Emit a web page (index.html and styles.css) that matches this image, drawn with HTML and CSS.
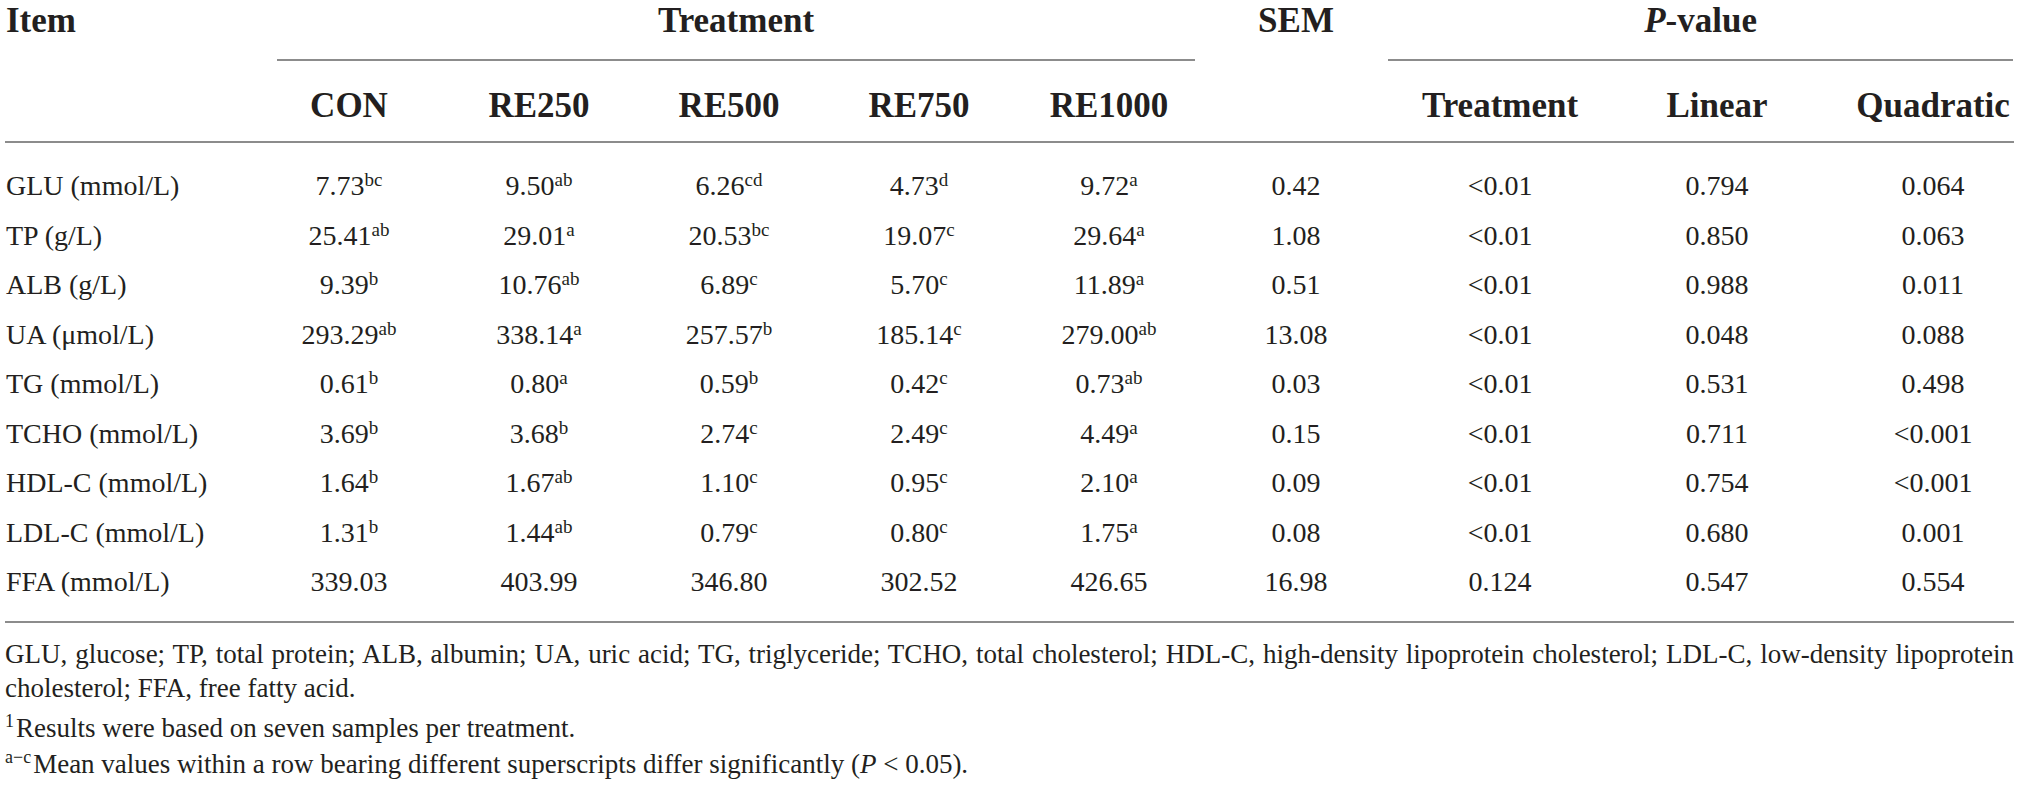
FILE: index.html
```html
<!DOCTYPE html>
<html lang="en">
<head>
  <meta charset="UTF-8">
  <meta name="viewport" content="width=device-width, initial-scale=1.0">
  <title>Serum biochemical parameters</title>
  <link rel="stylesheet" href="styles.css">
</head>
<body>

  <div class="container">
    <table class="data-table">
      <colgroup>
        <col class="col-item">
        <col class="col-trt">
        <col class="col-trt">
        <col class="col-trt">
        <col class="col-trt">
        <col class="col-trt">
        <col class="col-sem">
        <col class="col-p1">
        <col class="col-p2">
        <col class="col-p3">
      </colgroup>
      <thead>
        <tr class="head-top">
          <th rowspan="2" class="item">Item</th>
          <th colspan="5" class="group group-trt"><div class="group-rule">Treatment</div></th>
          <th rowspan="2" class="sem">SEM</th>
          <th colspan="3" class="group group-p"><div class="group-rule"><i>P</i>-value</div></th>
        </tr>
        <tr class="head-sub">
          <th>CON</th>
          <th>RE250</th>
          <th>RE500</th>
          <th>RE750</th>
          <th>RE1000</th>
          <th>Treatment</th>
          <th>Linear</th>
          <th class="last">Quadratic</th>
        </tr>
      </thead>
      <tbody>
        <tr>
          <td class="label">GLU (mmol/L)</td>
          <td>7.73<sup>bc</sup></td>
          <td>9.50<sup>ab</sup></td>
          <td>6.26<sup>cd</sup></td>
          <td>4.73<sup>d</sup></td>
          <td>9.72<sup>a</sup></td>
          <td>0.42</td>
          <td>&lt;0.01</td>
          <td>0.794</td>
          <td class="last">0.064</td>
        </tr>
        <tr>
          <td class="label">TP (g/L)</td>
          <td>25.41<sup>ab</sup></td>
          <td>29.01<sup>a</sup></td>
          <td>20.53<sup>bc</sup></td>
          <td>19.07<sup>c</sup></td>
          <td>29.64<sup>a</sup></td>
          <td>1.08</td>
          <td>&lt;0.01</td>
          <td>0.850</td>
          <td class="last">0.063</td>
        </tr>
        <tr>
          <td class="label">ALB (g/L)</td>
          <td>9.39<sup>b</sup></td>
          <td>10.76<sup>ab</sup></td>
          <td>6.89<sup>c</sup></td>
          <td>5.70<sup>c</sup></td>
          <td>11.89<sup>a</sup></td>
          <td>0.51</td>
          <td>&lt;0.01</td>
          <td>0.988</td>
          <td class="last">0.011</td>
        </tr>
        <tr>
          <td class="label">UA (μmol/L)</td>
          <td>293.29<sup>ab</sup></td>
          <td>338.14<sup>a</sup></td>
          <td>257.57<sup>b</sup></td>
          <td>185.14<sup>c</sup></td>
          <td>279.00<sup>ab</sup></td>
          <td>13.08</td>
          <td>&lt;0.01</td>
          <td>0.048</td>
          <td class="last">0.088</td>
        </tr>
        <tr>
          <td class="label">TG (mmol/L)</td>
          <td>0.61<sup>b</sup></td>
          <td>0.80<sup>a</sup></td>
          <td>0.59<sup>b</sup></td>
          <td>0.42<sup>c</sup></td>
          <td>0.73<sup>ab</sup></td>
          <td>0.03</td>
          <td>&lt;0.01</td>
          <td>0.531</td>
          <td class="last">0.498</td>
        </tr>
        <tr>
          <td class="label">TCHO (mmol/L)</td>
          <td>3.69<sup>b</sup></td>
          <td>3.68<sup>b</sup></td>
          <td>2.74<sup>c</sup></td>
          <td>2.49<sup>c</sup></td>
          <td>4.49<sup>a</sup></td>
          <td>0.15</td>
          <td>&lt;0.01</td>
          <td>0.711</td>
          <td class="last">&lt;0.001</td>
        </tr>
        <tr>
          <td class="label">HDL-C (mmol/L)</td>
          <td>1.64<sup>b</sup></td>
          <td>1.67<sup>ab</sup></td>
          <td>1.10<sup>c</sup></td>
          <td>0.95<sup>c</sup></td>
          <td>2.10<sup>a</sup></td>
          <td>0.09</td>
          <td>&lt;0.01</td>
          <td>0.754</td>
          <td class="last">&lt;0.001</td>
        </tr>
        <tr>
          <td class="label">LDL-C (mmol/L)</td>
          <td>1.31<sup>b</sup></td>
          <td>1.44<sup>ab</sup></td>
          <td>0.79<sup>c</sup></td>
          <td>0.80<sup>c</sup></td>
          <td>1.75<sup>a</sup></td>
          <td>0.08</td>
          <td>&lt;0.01</td>
          <td>0.680</td>
          <td class="last">0.001</td>
        </tr>
        <tr>
          <td class="label">FFA (mmol/L)</td>
          <td>339.03</td>
          <td>403.99</td>
          <td>346.80</td>
          <td>302.52</td>
          <td>426.65</td>
          <td>16.98</td>
          <td>0.124</td>
          <td>0.547</td>
          <td class="last">0.554</td>
        </tr>
      </tbody>
    </table>

    <div class="notes">
      <div class="note-first">GLU, glucose; TP, total protein; ALB, albumin; UA, uric acid; TG, triglyceride; TCHO, total cholesterol; HDL-C, high-density lipoprotein cholesterol; LDL-C, low-density lipoprotein</div>
      <div class="note">cholesterol; FFA, free fatty acid.</div>
      <div class="note note-gap"><sup class="mark">1</sup>Results were based on seven samples per treatment.</div>
      <div class="note note-gap-sm"><sup class="mark">a−c</sup>Mean values within a row bearing different superscripts differ significantly (<i>P</i> &lt; 0.05).</div>
    </div>
  </div>

</body>
</html>
```

FILE: styles.css
```css
body {
    margin: 0;
    font-family: "Liberation Serif", "Times New Roman", serif;
    color: #231f20;
    background: #fff;
}
.container {
    width: 2009px;
    padding-left: 5px;
}
.data-table {
    width: 100%;
    table-layout: fixed;
    border-collapse: separate;
    border-spacing: 0;
}
.col-item { width: 249px; }
.col-trt { width: 190px; }
.col-sem { width: 184px; }
.col-p1 { width: 224px; }
.col-p2 { width: 210px; }
.col-p3 { width: 192px; }

.data-table th {
    font-size: 35px;
    line-height: 40px;
    font-weight: bold;
    text-align: center;
    vertical-align: top;
    white-space: nowrap;
    padding: 0;
}
.head-top th {
    padding: 1px 0 18px;
}
.head-top .item {
    text-align: left;
    padding-left: 1px;
}
.head-top .item, .head-top .sem {
    border-bottom: 2px solid #8c8c8c;
}
.head-top .group {
    padding-bottom: 0;
}
.group-trt {
    padding-left: 23px !important;
    padding-right: 9px !important;
}
.group-p {
    padding-right: 1px !important;
}
.group-rule {
    padding-bottom: 18px;
    border-bottom: 2px solid #8c8c8c;
}
.head-sub th {
    padding: 25px 0 15px;
    border-bottom: 2px solid #8c8c8c;
}

.data-table td {
    font-size: 28px;
    line-height: 49.5px;
    text-align: center;
    white-space: nowrap;
    padding: 0;
}
.data-table td.label {
    text-align: left;
    padding-left: 1px;
}
.data-table .head-sub th.last,
.data-table td.last {
    padding-left: 30px;
}
.data-table tbody tr:first-child td {
    padding-top: 18px;
}
.data-table tbody tr:last-child td {
    padding-bottom: 14px;
    border-bottom: 2px solid #8c8c8c;
}
.data-table sup {
    font-size: 19px;
    line-height: 0;
    vertical-align: 9px;
}

.notes {
    margin-top: 14px;
    font-size: 27px;
    line-height: 34px;
}
.note-first {
    text-align: justify;
    text-align-last: justify;
}
.note-gap {
    margin-top: 6px;
}
.note-gap-sm {
    margin-top: 2px;
}
.mark {
    font-size: 18px;
    line-height: 0;
    vertical-align: 10px;
    margin-right: 2px;
}
```
